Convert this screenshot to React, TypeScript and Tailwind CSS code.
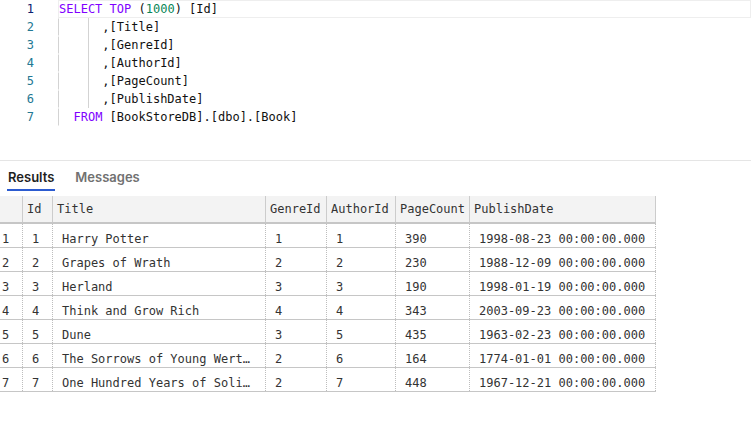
const mono = "font-['DejaVu_Sans_Mono','Liberation_Mono',monospace]";

const kw = "text-[#8000ff]";

type Seg = { t: string; c?: string };

const codeLines: Seg[][] = [
  [
    { t: "SELECT", c: kw },
    { t: " " },
    { t: "TOP", c: kw },
    { t: " (" },
    { t: "1000", c: "text-[#098658]" },
    { t: ") [Id]" },
  ],
  [{ t: "      ,[Title]" }],
  [{ t: "      ,[GenreId]" }],
  [{ t: "      ,[AuthorId]" }],
  [{ t: "      ,[PageCount]" }],
  [{ t: "      ,[PublishDate]" }],
  [{ t: "  " }, { t: "FROM", c: kw }, { t: " [BookStoreDB].[dbo].[Book]" }],
];

const books = [
  { id: 1, title: "Harry Potter", genre: 1, author: 1, pages: 390, date: "1998-08-23 00:00:00.000" },
  { id: 2, title: "Grapes of Wrath", genre: 2, author: 2, pages: 230, date: "1988-12-09 00:00:00.000" },
  { id: 3, title: "Herland", genre: 3, author: 3, pages: 190, date: "1998-01-19 00:00:00.000" },
  { id: 4, title: "Think and Grow Rich", genre: 4, author: 4, pages: 343, date: "2003-09-23 00:00:00.000" },
  { id: 5, title: "Dune", genre: 3, author: 5, pages: 435, date: "1963-02-23 00:00:00.000" },
  { id: 6, title: "The Sorrows of Young Werther", genre: 2, author: 6, pages: 164, date: "1774-01-01 00:00:00.000" },
  { id: 7, title: "One Hundred Years of Solitude", genre: 2, author: 7, pages: 448, date: "1967-12-21 00:00:00.000" },
];

const cols = [
  { key: "num", label: "", w: "w-[23px]" },
  { key: "id", label: "Id", w: "w-[30px]" },
  { key: "title", label: "Title", w: "w-[213px]" },
  { key: "genre", label: "GenreId", w: "w-[61px]" },
  { key: "author", label: "AuthorId", w: "w-[69px]" },
  { key: "pages", label: "PageCount", w: "w-[74px]" },
  { key: "date", label: "PublishDate", w: "w-[186px]" },
];

function Editor() {
  return (
    <div className={`relative h-[160px] ${mono} text-[12px] leading-[18px]`}>
      {codeLines.map((line, i) => (
        <div key={i} className="flex h-[18px]">
          <div className={`w-[34px] text-right ${i === 0 ? "text-[#0b216f]" : "text-[#237893]"}`}>{i + 1}</div>
          <div className="w-[24px]" />
          <div
            className={`flex-1 whitespace-pre border text-[#111111] ${
              i === 0 ? "border-[#eeeeee]" : "border-transparent border-l-[#d3d3d3]"
            } leading-[16px]`}
          >
            {line.map((s, j) => (
              <span key={j} className={s.c}>
                {s.t}
              </span>
            ))}
          </div>
        </div>
      ))}
      {/* indent guide at column 4 */}
      <div className="absolute left-[88px] top-[18px] h-[90px] w-px bg-[#d3d3d3]" />
    </div>
  );
}

function Tabs() {
  return (
    <div className="flex gap-[20px] pl-[7px] pt-[8px] font-['Inter','Noto_Sans',sans-serif] text-[13px] leading-[16px]">
      <div className="flex flex-col items-center">
        <div className="px-[1px] font-semibold text-[#1f1f1f]">Results</div>
        <div className="mt-[4px] h-[2px] w-full bg-[#2b5bd0]" />
      </div>
      <div className="font-semibold text-[#717171]">Messages</div>
    </div>
  );
}

function cellValue(b: (typeof books)[number], key: string, i: number) {
  switch (key) {
    case "num":
      return i + 1;
    case "id":
      return b.id;
    case "title":
      return b.title;
    case "genre":
      return b.genre;
    case "author":
      return b.author;
    case "pages":
      return b.pages;
    default:
      return b.date;
  }
}

function Grid() {
  return (
    <div className={`mt-[5px] w-[656px] ${mono} text-[12px] leading-[16px] text-[#333333]`}>
      <div className="flex h-[28px] border-b-2 border-[#c6c6c6] bg-[#f3f3f3]">
        {cols.map((c) => (
          <div key={c.key} className={`${c.w} shrink-0 border-r border-[#cccccc] pl-[4px] pt-[5px]`}>
            {c.label}
          </div>
        ))}
      </div>
      {books.map((b, i) => (
        <div key={b.id} className="flex h-[24px] border-b border-[#c6c6c6]">
          {cols.map((c) => (
            <div
              key={c.key}
              className={`${c.w} shrink-0 overflow-hidden text-ellipsis whitespace-nowrap border-r border-dotted border-[#bdbdbd] pt-[7px] ${
                c.key === "num" ? "pl-[2px]" : "pl-[9px]"
              } ${c.key === "title" ? "pr-[12px]" : ""}`}
            >
              {cellValue(b, c.key, i)}
            </div>
          ))}
        </div>
      ))}
    </div>
  );
}

export default function App() {
  return (
    <div className="h-[428px] w-[751px] overflow-hidden bg-white">
      <Editor />
      <div className="h-px bg-[#e5e5e5]" />
      <Tabs />
      <Grid />
    </div>
  );
}
